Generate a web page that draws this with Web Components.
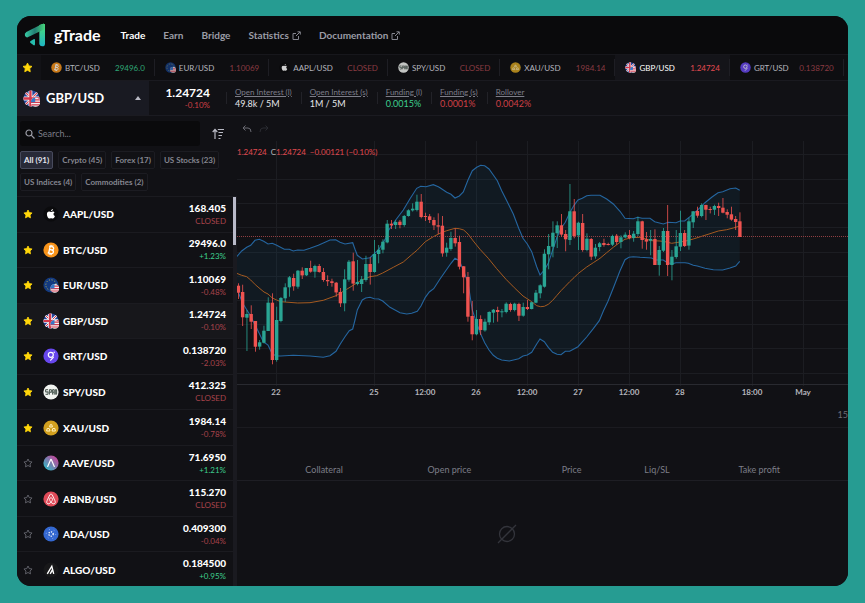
<!DOCTYPE html>
<html lang="en">
<head>
<meta charset="utf-8">
<title>gTrade</title>
<style>
html{background:#269c92}
body{margin:0;padding:16px 17px 17px;background:#269c92;font-family:Lato,"Liberation Sans",sans-serif;color:#fff}
</style>
</head>
<body>
<trade-app></trade-app>
<script>
const define = (name, html) => customElements.define(name, class extends HTMLElement {
  connectedCallback() {
    if (this.shadowRoot) return;
    const t = document.createElement('template');
    t.innerHTML = typeof html === 'function' ? html(this) : html;
    this.attachShadow({mode: 'open'}).append(t.content.cloneNode(true));
  }
});
const tone = v => /CLOSED|^-/.test(v) ? 'down' : 'up';

/* Round asset marks, drawn on a 16 x 16 grid */
const usFlag = `<g clip-path="url(#u)"><rect x="7" y="7" width="10" height="10" fill="#f3f3f5"/><path d="M7 9.2h10M7 11.6h10M7 14h10" stroke="#d5394c" stroke-width="1.2"/><rect x="6" y="6.5" width="5.5" height="5" fill="#3478c8"/></g>`;
const flagClip = `<defs><clipPath id="c"><circle cx="8" cy="8" r="7.6"/></clipPath><clipPath id="u"><circle cx="11.8" cy="11.4" r="4.4"/></clipPath></defs>`;
const coins = {
  AAPL: `<circle cx="8" cy="8" r="7.6" fill="#0b0b0d"/><path d="M10.2 5.4c-.9-.1-1.5.5-2.1.5s-1.2-.5-2-.5C4.7 5.4 3.9 6.7 3.9 8.3c0 2 1.3 4.3 2.5 4.3.6 0 .9-.4 1.7-.4s1 .4 1.7.4c1 0 1.8-1.4 2.2-2.5-1-.4-1.5-1.2-1.5-2.1 0-.8.4-1.4 1.1-1.8-.4-.5-.9-.8-1.4-.8zM9.900 3c-1 .1-1.9 1-1.8 2.1 1 0 1.9-1 1.8-2.1z" fill="#fff"/>`,
  BTC: `<circle cx="8" cy="8" r="7.6" fill="#f7931a"/><g fill="none" stroke="#fff" stroke-width="1.3" transform="rotate(12 8 8)"><path d="M5.3 4.6h3.4c2.2 0 2.2 3.2 0 3.2H6.3h2.6c2.5 0 2.5 3.6 0 3.6H5.3M6.4 4.6v6.8M7.2 3v1.6M9 3v1.6M7.2 11.4v1.6M9 11.4v1.6"/></g>`,
  EUR: `${flagClip}<circle cx="8" cy="8" r="7.6" fill="#143a80"/><circle cx="8" cy="8" r="5.2" fill="none" stroke="#b9b84e" stroke-width="1" stroke-dasharray="1 1.72"/>${usFlag}`,
  GBP: `${flagClip}<g clip-path="url(#c)"><rect width="16" height="16" fill="#23449b"/><path d="M0 0l16 16M16 0L0 16" stroke="#f4f4f6" stroke-width="2.4"/><path d="M0 0l16 16M16 0L0 16" stroke="#d5394c" stroke-width="1"/><path d="M7 0v16M0 8h16" stroke="#f4f4f6" stroke-width="3.6"/><path d="M7 0v16M0 8h16" stroke="#d5394c" stroke-width="2.2"/></g>${usFlag}`,
  GRT: `<circle cx="8" cy="8" r="7.6" fill="#6747ed"/><circle cx="7.8" cy="6.8" r="2.5" fill="none" stroke="#fff" stroke-width="1.2"/><path d="M10.3 9.3l-2.6 2.9" stroke="#fff" stroke-width="1.2" stroke-linecap="round"/><circle cx="11.2" cy="4.2" r=".7" fill="#fff"/>`,
  SPY: `<circle cx="8" cy="8" r="7.6" fill="#f1f3f0"/><path d="M5 5.7H2.6v2.2H5v2.4H2.5M6.4 10.6V5.7h2v2.6h-2M9.6 10.6V5.7h1.6v4.9M9.6 8.3h1.6M12.3 10.6V5.7h1.3v4.9" stroke="#45534c" fill="none"/><path d="M2.5 8h11" stroke="#6b7a72" stroke-width=".7"/>`,
  XAU: `<circle cx="8" cy="8" r="7.6" fill="#d2a01f"/><g fill="none" stroke="#fff1c0" stroke-width="1"><path d="M6.6 7l.6-2.3h1.6L9.4 7zM3.6 11l.6-2.5h2L7 11zM9 11l.8-2.5h2l.6 2.5z"/></g>`,
  AAVE: `<defs><linearGradient id="g" x1="1" x2="0" y2="1"><stop offset=".2" stop-color="#b6509e"/><stop offset=".9" stop-color="#2ebac6"/></linearGradient></defs><circle cx="8" cy="8" r="7.6" fill="url(#g)"/><path d="M4.7 11.4L7.5 4.9q.5-1 1 0l2.8 6.5" fill="none" stroke="#fff" stroke-width="1.2" stroke-linecap="round"/>`,
  ABNB: `<circle cx="8" cy="8" r="7.6" fill="#e04a58"/><path d="M8 11.2C5.9 8.9 6 6.9 8 6.9s2.1 2 0 4.3c-1.4 1.6-3 2.2-4 1-.8-1 0-2.3.8-4.1L6.7 4c.7-1.3 1.9-1.3 2.6 0l1.9 4.1c.8 1.8 1.6 3.1.8 4.1-1 1.2-2.6.6-4-1z" fill="none" stroke="#fff" stroke-width=".9"/>`,
  ADA: `<circle cx="8" cy="8" r="7.6" fill="#3468d1"/><circle cx="8" cy="8" r="2.2" fill="none" stroke="#fff" stroke-width="1.3" stroke-dasharray="1.2 1.1"/><circle cx="8" cy="8" r="4.7" fill="none" stroke="#b6cbf4" stroke-width=".8" stroke-dasharray=".8 4.12"/>`,
  ALGO: `<circle cx="8" cy="8" r="7.6" fill="#18181a"/><path d="M4.3 11.8l4.5-7.6 1.9 7.6M7.2 11.8l2.5-4.4" fill="none" stroke="#fff" stroke-width="1.4"/>`
};
define('coin-icon', el => `<style>:host{display:block;flex:none;width:16px;height:16px}svg{display:block;width:100%;height:100%}</style><svg viewBox="0 0 16 16" aria-hidden="true">${coins[el.getAttribute('name')]}</svg>`);

define('star-icon', `<style>:host{display:block;flex:none;width:10px;height:10px}svg{display:block;width:100%;height:100%;fill:#ffd60a;stroke:#ffd60a}:host([off]) svg{fill:none;stroke:#6c6d76}</style>
<svg viewBox="0 0 12 12" aria-hidden="true"><path stroke-linejoin="round" d="M6 1.2l1.5 3.1 3.4.5-2.5 2.4.6 3.4-3-1.6-3 1.6.6-3.4L1.1 4.8l3.4-.5z"/></svg>`);

define('nav-link', el => `<style>:host{display:block}a{display:flex;align-items:center;gap:3px;color:#9b9ca6;font-size:10px;font-weight:700;line-height:14px;text-decoration:none}:host([active]) a{color:#fff}svg{width:9px;height:9px;fill:none;stroke:#85868f}</style>
<a href="#"><slot></slot>${el.hasAttribute('external') ? '<svg viewBox="0 0 9 9" aria-hidden="true"><path d="M4 2.5H1v6h5.500V5M5.500.8h2.800v2.800M8 1L4 5"/></svg>' : ''}</a>`);

define('app-header', `<style>:host{display:flex;align-items:center;height:38px;padding:0 7px;background:#0a0a0c;border-bottom:1px solid #17171c}
.logo{display:block;width:22px;height:24px;margin-right:8px}h1{margin:0;font-size:16px;line-height:20px;font-weight:700}nav{display:flex;gap:18px;margin-left:20px}</style>
<svg class="logo" viewBox="72 68 66 72" aria-hidden="true"><defs><linearGradient id="a" x2="0" y2="1"><stop stop-color="#4be072"/><stop offset="1" stop-color="#1eb5c4"/></linearGradient><linearGradient id="b"><stop stop-color="#38cda6"/><stop offset=".5" stop-color="#237d73"/><stop offset="1" stop-color="#46d77c"/></linearGradient></defs>
<path fill="url(#a)" d="M118 74l12-4q5-1 5 6v54q0 8-8 8-9 0-9-9z"/><path fill="url(#b)" d="M75 106q-3-6 4-11l43-22q10-5 13-1v14L83 111q-5 1-8-5z"/><path fill="#26bdae" d="M92 122l10-6q3-1 3 3v13q0 4-4 3l-9-7q-5-3 0-6z"/></svg>
<h1>gTrade</h1>
<nav><nav-link active>Trade</nav-link><nav-link>Earn</nav-link><nav-link>Bridge</nav-link><nav-link external>Statistics</nav-link><nav-link external>Documentation</nav-link></nav>`);

define('ticker-item', el => { const [n, v, t] = ['name', 'value', 'tone'].map(k => el.getAttribute(k)); return `<style>:host{display:flex;flex:none;align-items:center;padding:4px 0;box-sizing:border-box}
a{display:flex;align-items:center;height:100%;padding:0 9px 0 10px;border-right:1px solid #1e1e24;color:#b4b5bd;text-decoration:none;font-size:8px;line-height:12px}
coin-icon{width:11px;height:11px;margin-right:3px;opacity:.8}b{font-weight:400;width:45px;text-align:right}.up{color:#2fa876}.down{color:#8a3b42}
:host([active]){background:#141419}:host([active]) a{color:#fff}:host([active]) b{color:#e24a50}:host([active]) coin-icon{opacity:1}</style>
<a href="#"><coin-icon name="${n}"></coin-icon><span>${n}/USD</span><b class="${t}">${v}</b></a>`; });

define('ticker-bar', `<style>:host{display:flex;height:25px;overflow:hidden;background:#0e0e11;border-bottom:1px solid #1a1a20}.fav{display:flex;align-items:center;justify-content:center;flex:none;width:24px;padding:0;border:0;background:#121216}.fav star-icon{width:11px;height:11px;margin-right:3px}</style>
<button class="fav" aria-label="Favourites"><star-icon></star-icon></button>
<ticker-item name="BTC" value="29496.0" tone="up"></ticker-item><ticker-item name="EUR" value="1.10069" tone="down"></ticker-item><ticker-item name="AAPL" value="CLOSED" tone="down"></ticker-item><ticker-item name="SPY" value="CLOSED" tone="down"></ticker-item><ticker-item name="XAU" value="1984.14" tone="down"></ticker-item><ticker-item name="GBP" value="1.24724" tone="down" active></ticker-item><ticker-item name="GRT" value="0.138720" tone="down"></ticker-item>`);

define('stat-item', el => `<style>:host{display:flex;align-items:center}dl{margin:0}dt{font-size:8px;line-height:11px;color:#7d7e89;text-decoration:underline;text-underline-offset:1px}dd{margin:0;font-size:9px;line-height:12px;color:#e6e6ea}:host([tone=up]) dd{color:#3ecf8e}:host([tone=down]) dd{color:#cf4045}
:host::before{content:"";width:1px;height:12px;margin:0 8px 0 9px;background:#222228}</style><dl><dt>${el.getAttribute('label')}</dt><dd><slot></slot></dd></dl>`);

define('pair-summary', `<style>:host{display:flex;align-items:stretch;height:34px;background:#111115;border-bottom:1px solid #1b1b21}
button{display:flex;align-items:center;width:132px;padding:0 8px 0 6px;border:0;background:#191a22;color:#fff;font:700 13px/18px Lato,sans-serif}button coin-icon{width:17px;height:17px;margin-right:6px}button svg{width:6px;height:4px;margin-left:auto;fill:#b9bac4}
.price{width:61px;padding-top:4px;text-align:right}.price strong{display:block;font-size:12px;line-height:15px;font-weight:700}.price span{display:block;font-size:8px;line-height:10px;color:#cf4045}.stats{display:flex;padding-left:7px}</style>
<button aria-haspopup="listbox"><coin-icon name="GBP"></coin-icon>GBP/USD<svg viewBox="0 0 6 4" aria-hidden="true"><path d="M0 4l3-4 3 4z"/></svg></button>
<div class="price"><strong>1.24724</strong><span>-0.10%</span></div>
<div class="stats"><stat-item label="Open Interest (l)">49.8k / 5M</stat-item><stat-item label="Open Interest (s)">1M / 5M</stat-item><stat-item label="Funding (l)" tone="up">0.0015%</stat-item><stat-item label="Funding (s)" tone="down">0.0001%</stat-item><stat-item label="Rollover" tone="down">0.0042%</stat-item></div>`);

define('filter-chip', `<style>:host{display:block}button{display:block;padding:0 3px;border:1px solid #1c1c22;border-radius:2px;background:#111115;color:#858690;font:700 8px/16px Lato,sans-serif}:host([active]) button{background:#282a38;border-color:#474a5c;color:#e6e7ef}</style><button><slot></slot></button>`);

define('pair-row', el => { const [n, p, c] = ['name', 'price', 'change'].map(k => el.getAttribute(k)); return `<style>:host{display:flex;align-items:center;min-height:33px;padding:0 7px 0 6px;border-bottom:1px solid #1b1b20}:host([active]){background:#17171b}
.star{display:block;padding:0;border:0;background:none;margin-right:10px}a{display:flex;align-items:center;flex:1;color:#fff;text-decoration:none;font-weight:900;font-size:10px}.name{margin-left:4px}.num{margin-left:auto;text-align:right;line-height:13px}.num small{display:block;font-size:8px;line-height:12px;font-weight:400}.up{color:#3ecf8e}.down{color:#a8434b}</style>
<button class="star" aria-label="Favourite ${n}"><star-icon${el.hasAttribute('fav') ? '' : ' off'}></star-icon></button><a href="#"><coin-icon name="${n}"></coin-icon><span class="name">${n}/USD</span><span class="num">${p}<small class="${tone(c)}">${c}</small></span></a>`; });

const pairs = [['AAPL', '168.405', 'CLOSED', 1], ['BTC', '29496.0', '+1.23%', 1], ['EUR', '1.10069', '-0.48%', 1], ['GBP', '1.24724', '-0.10%', 1], ['GRT', '0.138720', '-2.03%', 1], ['SPY', '412.325', 'CLOSED', 1], ['XAU', '1984.14', '-0.78%', 1], ['AAVE', '71.6950', '+1.21%'], ['ABNB', '115.270', 'CLOSED'], ['ADA', '0.409300', '-0.04%'], ['ALGO', '0.184500', '+0.95%']];
define('pair-sidebar', `<style>:host{display:flex;flex-direction:column;background:#111115}
.tools{padding:5px 13px 5px 3px;border-bottom:1px solid #1b1b20}.search{display:flex;align-items:center;gap:12px}label{display:flex;align-items:center;flex:1;height:25px;padding-left:5px;gap:3px;border-radius:3px;background:#0a0a0c}input{flex:1;min-width:0;padding:0;border:0;outline:0;background:none;color:#fff;font:9px/14px Lato,sans-serif}input::placeholder{color:#7c7d87;opacity:1}
label svg{width:10px;height:10px;fill:none;stroke:#9b9ca6;stroke-width:1.2}.sort{padding:0;border:0;background:none}.sort svg{display:block;width:12px;height:12px;fill:none;stroke:#b9bac4;stroke-width:1.2}
.chips{display:flex;flex-wrap:wrap;gap:4px 5px;margin:5px -14px 0 0}.area{display:flex;flex:1}.list{display:grid;grid-auto-rows:1fr;flex:1;margin-bottom:-2px}.bar{width:4px;background:#1a1a20}.bar i{display:block;width:3px;height:48px;background:#b9bac9}</style>
<div class="tools"><div class="search"><label><svg viewBox="0 0 10 10" aria-hidden="true"><circle cx="4" cy="4" r="3"/><path d="M6.2 6.2L9.5 9.5"/></svg><input type="search" aria-label="Search pairs" placeholder="Search..."></label><button class="sort" aria-label="Sort"><svg viewBox="0 0 12 12" aria-hidden="true"><path d="M3 11V1.500M.7 4L3 1.500 5.300 4M5.800 1.500H12M6.500 4.500h4.500M6.500 7.500H10M6.500 10.500H8.500"/></svg></button></div>
<div class="chips"><filter-chip active>All (91)</filter-chip><filter-chip>Crypto (45)</filter-chip><filter-chip>Forex (17)</filter-chip><filter-chip>US Stocks (23)</filter-chip><filter-chip>US Indices (4)</filter-chip><filter-chip>Commodities (2)</filter-chip></div></div>
<div class="area"><div class="list">${pairs.map(([n, p, c, f]) => `<pair-row name="${n}" price="${p}" change="${c}"${f ? ' fav' : ''}${n === 'GBP' ? ' active' : ''}></pair-row>`).join('')}</div><div class="bar"><i></i></div></div>`);

/* Hourly candles: direction, high, body top, body bottom, low */
const candles = [
[750, `r100,107,128,147 r104,126,202,228 g180,192,203,303 r166,192,215,237 r213,213,290,305 g270,277,290,299 g227,242,278,280 g142,158,243,243 r130,158,330,343 g170,210,330,335 g141,144,213,217 g100,112,145,156 g78,82,112,140 r71,84,109,122 g60,62,110,116 r52,62,76,87 g54,54,76,78 r32,54,65,68 g44,48,65,83 r42,48,66,68 r54,66,90,95 r76,90,94,108 r86,94,99,110 r96,98,127,140 r114,126,160,171 g58,88,160,184 g30,35,89,95 r8,34,101,122 g30,96,102,106 g78,88,102,126 g17,42,90,95 r22,42,66,104 g-30,12,66,68`],
[330, `g405,419,432,460 g388,395,419,430 g330,341,397,400 r330,341,346,357 g330,336,345,357 r330,335,345,355 g315,318,345,350 g298,301,318,320 g280,296,301,305 g254,275,300,304 r252,275,321,325 r308,318,321,333 r312,319,330,339 r322,330,346,360 r310,346,350,372 r318,347,430,440`],
[450, `g278,293,308,320 g245,264,297,302 r235,264,280,290 r257,276,350,358 r348,349,382,430 r366,381,500,515 r453,498,553,571 g480,507,553,556 r496,507,540,555 g506,515,541,545 g484,486,517,525 g477,479,488,518 r470,480,486,515 g477,484,486,502 g457,461,486,490 r458,462,480,485 g458,461,480,484 r458,462,497,513 g458,471,497,500 r450,471,477,480 g455,457,477,478 g420,428,458,460 g403,406,430,445 g298,311,410,413 g252,288,313,358 g214,248,290,322 g214,226,250,294 r192,226,254,260 r240,252,268,304 g102,184,270,285 r147,184,258,265 g215,218,256,300 r192,219,300,305 g250,266,300,304 r264,267,320,330 g282,293,319,326 g276,280,291,304 r266,279,285,290 r278,282,285,286 g254,258,284,288 r252,257,276,284 g256,262,276,295 g247,254,262,265 r240,255,264,268 g243,251,264,275 g200,214,252,258 r212,214,270,296 r246,268,275,299 g240,267,272,316 r238,267,345,345 g288,300,345,377 g234,243,302,306 r165,243,345,378 g300,320,345,391 g240,289,321,326 g182,249,290,303 r240,249,288,291 g203,214,287,299 g183,184,217,234 r170,183,197,203 g160,165,198,202 r164,165,179,210 r170,177,180,190 g164,168,179,195 r158,168,174,198 r144,173,188,190 r178,186,194,205 r170,193,209,212 r198,207,216,240 r187,214,261,261`]
];
/* Band lines as runs of points: origin x, origin y, then x,y steps of a third of a unit */
const upper = [[230, 110, '20,440 35,423 50,412 62,406 75,391 88,388 101,394 114,402 127,400 140,406 163,418 178,418 190,423 203,420 222,421 240,415 265,406 300,390 317,389 330,397 345,402 368,398 375,418 382,436 397,447 420,443 446,419 468,383 475,362 497,330 520,300 540,266 560,235 572,229 588,230 610,224 625,230'],
[440, 150, '0,113 20,127 33,133 45,144 58,138 70,126 84,90 97,62 110,52 122,46 134,47 147,57 160,75 172,92 185,122 198,148 220,192 236,235 249,265 262,282 275,305 290,350 300,375 313,360 325,340 338,300 351,262 363,235 376,217 389,188 402,166 414,150 427,145 440,137 453,136 480,136 500,147 520,162 540,184 555,205 580,206 593,202 606,205'],
[640, 150, '30,205 44,215 70,222 85,217 108,218 120,213 134,213 150,200 175,178 195,158 215,142 234,128 248,125 270,116 287,114 299,121']];
const lower = [[230, 250, '20,115 38,160 60,195 80,235 100,275 114,285 127,312 140,318 152,318 190,316 240,318 280,322 300,317 318,304 331,282 345,260 358,242 368,237 375,210 382,180 397,150 407,144 420,142 433,146 446,147 458,153 480,172 510,188 530,192 545,190 562,184 573,168 586,142 598,126 611,116'],
[440, 150, '0,387 14,367 33,340 45,325 58,332 70,360 84,398 92,450 97,480 110,520 122,552 134,578 147,600 160,616 172,625 185,630 208,633 236,626 249,618 262,615 275,607 290,582 300,567 313,575 325,592 338,607 351,613 363,614 376,604 389,604 414,590 440,561 460,536 478,512 491,481 504,454 520,414 540,362 555,329 567,322 580,320'],
[640, 150, '0,322 35,324 46,330 70,330 82,338 97,341 108,338 135,338 145,340 160,346 172,348 195,355 220,359 248,360 270,354 287,348 299,334']];
const middle = [[230, 250, '20,70 35,76 50,80 62,90 76,104 90,116 102,126 114,132 127,144 140,150 152,155 165,156 203,159 240,158 280,151 318,137 350,118 395,90 420,80 440,77 458,69 490,52 520,36 545,14 562,0 586,-25 610,-40'],
[440, 150, '0,250 20,242 45,235 58,236 71,240 84,252 100,273 120,298 145,325 170,356 198,388 223,413 249,438 275,455 290,467 302,470 313,469 325,463 338,451 351,436 363,422 376,409 389,395 402,383 414,371 440,351 460,338 480,325 500,308 520,292 540,277 555,268 575,263 600,262'],
[640, 150, '35,272 60,273 80,276 95,280 120,276 134,274 160,267 185,259 210,251 235,243 260,239 280,234 299,228']];
const points = runs => runs.flatMap(([ox, oy, s]) => s.split(' ').map(p => { const [x, y] = p.split(',').map(Number); return (ox + x / 3).toFixed(1) + ',' + (oy + y / 3).toFixed(1); }));
const U = points(upper), L = points(lower), M = points(middle);
const times = [[276, '22'], [374, '25'], [425, '12:00'], [476, '26'], [527, '12:00'], [578, '27'], [629, '12:00'], [680, '28'], [752, '18:00'], [803, 'May']];
let step = 0;
const candleMarks = candles.flatMap(([base, s]) => s.split(' ').map(c => {
  const [h, t, b, l] = c.slice(1).split(',').map(v => (base + Number(v)) / 3), x = 238.4 + 4.25 * step++;
  return `<g class="${c[0]}"><rect x="${(x - .35).toFixed(2)}" y="${h.toFixed(1)}" width=".8" height="${(l - h).toFixed(1)}"/><rect x="${(x - 1.7).toFixed(2)}" y="${t.toFixed(1)}" width="3.4" height="${Math.max(1, b - t).toFixed(1)}"/></g>`;
})).join('');

define('price-chart', `<style>:host{display:block;background:#111115;border-bottom:1px solid #1b1b20}
.tools{display:flex;align-items:center;gap:7px;height:25px;padding-left:5px}.tools button{padding:0;border:0;background:none}.tools svg{display:block;width:10px;height:8px;fill:none;stroke:#6a6b73}.tools button:last-child svg{stroke:#2b2c32}
.plot{position:relative}.plot svg{display:block;width:100%;height:auto}.legend{position:absolute;left:0;top:5px;display:flex;gap:4px;font-size:8px;line-height:12px;color:#e04a50;white-space:pre}.legend i{font-style:normal;color:#b5b6bd}
.grid{stroke:#1c1d22;fill:none}.g{fill:#2aa594}.r{fill:#ef5350}text{font:700 8px Lato,sans-serif;fill:#b5b6bd;text-anchor:middle}.foot{padding:6px 0;font-size:9px;line-height:12px;text-align:right;color:#6d6e77}</style>
<div class="tools"><button aria-label="Undo"><svg viewBox="0 0 10 8"><path d="M3.500.5L1 3l2.500 2.500M1 3h5q3 0 3 4"/></svg></button><button aria-label="Redo"><svg viewBox="0 0 10 8"><path d="M6.500.5L9 3 6.500 5.500M9 3H4Q1 3 1 7"/></svg></button></div>
<div class="plot"><svg viewBox="237 141 611 262" role="img" aria-label="GBP/USD price chart">
<path class="grid" d="${[154, 179, 203, 227, 252, 276, 300, 324, 348, 373].map(y => `M237 ${y}.5H848`).join('')}${times.map(([x]) => `M${x}.5 141V386`).join('')}"/><path d="M237 384.5H848" stroke="#292a30"/>
<polygon points="${U.join(' ')} ${[...L].reverse().join(' ')}" fill="#1687c5" fill-opacity=".08"/>
<polyline points="${U.join(' ')}" fill="none" stroke="#2566a0" stroke-width="1.1"/><polyline points="${L.join(' ')}" fill="none" stroke="#2566a0" stroke-width="1.1"/><polyline points="${M.join(' ')}" fill="none" stroke="#a55a20"/>
<path d="M237 236.5H848" stroke="#8f3f42" stroke-dasharray="1 1"/>${candleMarks}
${times.map(([x, t]) => `<text x="${x}" y="395">${t}</text>`).join('')}</svg>
<div class="legend"><span>1.24724</span><span><i>C</i>1.24724</span><span>−0.00121 (−0.10%)</span></div></div><div class="foot">15</div>`);

define('positions-table', `<style>:host{display:flex;flex:1;background:#111115}table{width:100%;border-collapse:collapse;table-layout:fixed}th{height:20px;padding:32px 0 0;border-bottom:1px solid #1e1e24;font-size:9px;line-height:20px;font-weight:400;color:#7c7d87;text-align:center}th:first-child{width:20%;padding-left:26px}th:nth-child(2){width:21%}th:nth-child(3){width:19%}th:nth-child(4){width:9%}th:last-child{padding-right:14px}
td{padding:0 72px 0 0;height:105px;vertical-align:middle}svg{display:block;width:20px;height:20px;margin:auto;fill:none;stroke:#33343b;stroke-width:1.3}</style>
<table><thead><tr><th>Collateral</th><th>Open price</th><th>Price</th><th>Liq/SL</th><th>Take profit</th></tr></thead><tbody><tr><td colspan="5"><svg viewBox="0 0 20 20" role="img" aria-label="No positions"><circle cx="10" cy="10" r="7.5"/><path d="M1 19L19 1"/></svg></td></tr></tbody></table>`);

define('trade-app', `<style>:host{display:flex;flex-direction:column;min-height:calc(100vh - 33px);overflow:hidden;border-radius:14px;background:#111115}.body{display:grid;grid-template-columns:220px minmax(0,1fr);flex:1}main{display:flex;flex-direction:column}</style>
<app-header></app-header><ticker-bar></ticker-bar><pair-summary></pair-summary><div class="body"><pair-sidebar></pair-sidebar><main><price-chart></price-chart><positions-table></positions-table></main></div>`);
</script>
</body>
</html>
